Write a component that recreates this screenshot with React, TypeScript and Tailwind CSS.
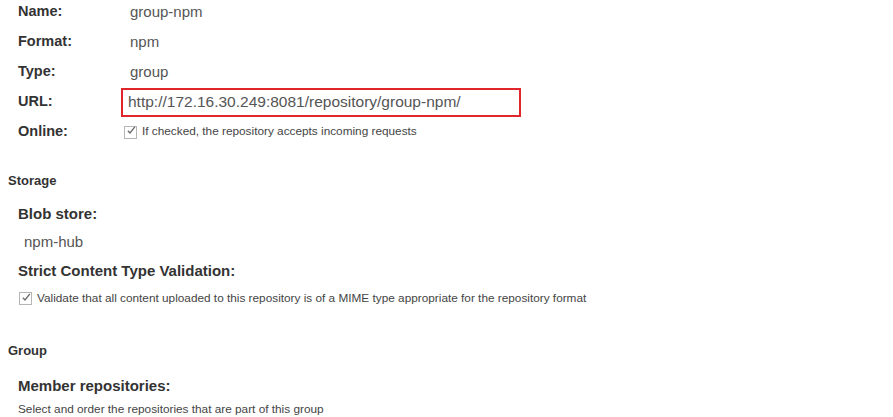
import React from 'react';

const Check = () => (
  <span className="inline-flex h-[13px] w-[13px] shrink-0 items-center justify-center border border-[#b5b5b5] bg-white">
    <svg width="13" height="13" viewBox="0 0 13 13" className="-mt-[3px] ml-[1px]">
      <path d="M2.5 6.8 L5.2 9.6 L11.5 1.8" fill="none" stroke="#6b6b6b" strokeWidth="1.8" />
    </svg>
  </span>
);

const InfoRow = ({ label, children }: { label: string; children: React.ReactNode }) => (
  <div className="flex h-[30px] items-center">
    <div className="w-[112px] shrink-0 text-[14.5px] font-bold text-[#333]">{label}</div>
    <div className="flex items-center text-[15px] text-[#555]">{children}</div>
  </div>
);

const App: React.FC = () => {
  return (
    <div className="h-[417px] w-[893px] overflow-hidden bg-white font-['Liberation_Sans',Arial,sans-serif]">
      {/* Settings */}
      <div className="-mt-[3px] pl-[18px]">
        <InfoRow label="Name:">group-npm</InfoRow>
        <InfoRow label="Format:">npm</InfoRow>
        <InfoRow label="Type:">group</InfoRow>
        <InfoRow label="URL:">
          <div className="-ml-[9px] flex h-[29px] w-[400px] items-center border-2 border-[#e0262b] pl-[5px] text-[15.5px]">
            http://172.16.30.249:8081/repository/group-npm/
          </div>
        </InfoRow>
        <div className="flex h-[30px] items-center">
          <div className="w-[106px] shrink-0 text-[14.5px] font-bold text-[#333]">Online:</div>
          <label className="flex items-center gap-[5px] text-[11.8px] text-[#444]">
            <Check />
            If checked, the repository accepts incoming requests
          </label>
        </div>
      </div>

      {/* Storage */}
      <div className="mt-[24px] pl-[8px] text-[13px] font-bold text-[#333]">Storage</div>
      <div className="pl-[18px]">
        <div className="mt-[12px] text-[15px] font-bold text-[#333]">Blob store:</div>
        <div className="mt-[6px] pl-[6px] text-[15px] text-[#555]">npm-hub</div>
        <div className="mt-[6px] text-[15px] font-bold text-[#333]">Strict Content Type Validation:</div>
        <label className="mt-[8px] flex items-center gap-[5px] pl-[1px] text-[11.8px] text-[#444]">
          <Check />
          Validate that all content uploaded to this repository is of a MIME type appropriate for the repository format
        </label>
      </div>

      {/* Group */}
      <div className="mt-[33px] pl-[8px] text-[13px] font-bold text-[#333]">Group</div>
      <div className="pl-[18px]">
        <div className="mt-[15px] text-[15px] font-bold text-[#333]">Member repositories:</div>
        <div className="mt-[3px] text-[11.8px] text-[#444]">Select and order the repositories that are part of this group</div>
      </div>
    </div>
  );
};

export default App;
